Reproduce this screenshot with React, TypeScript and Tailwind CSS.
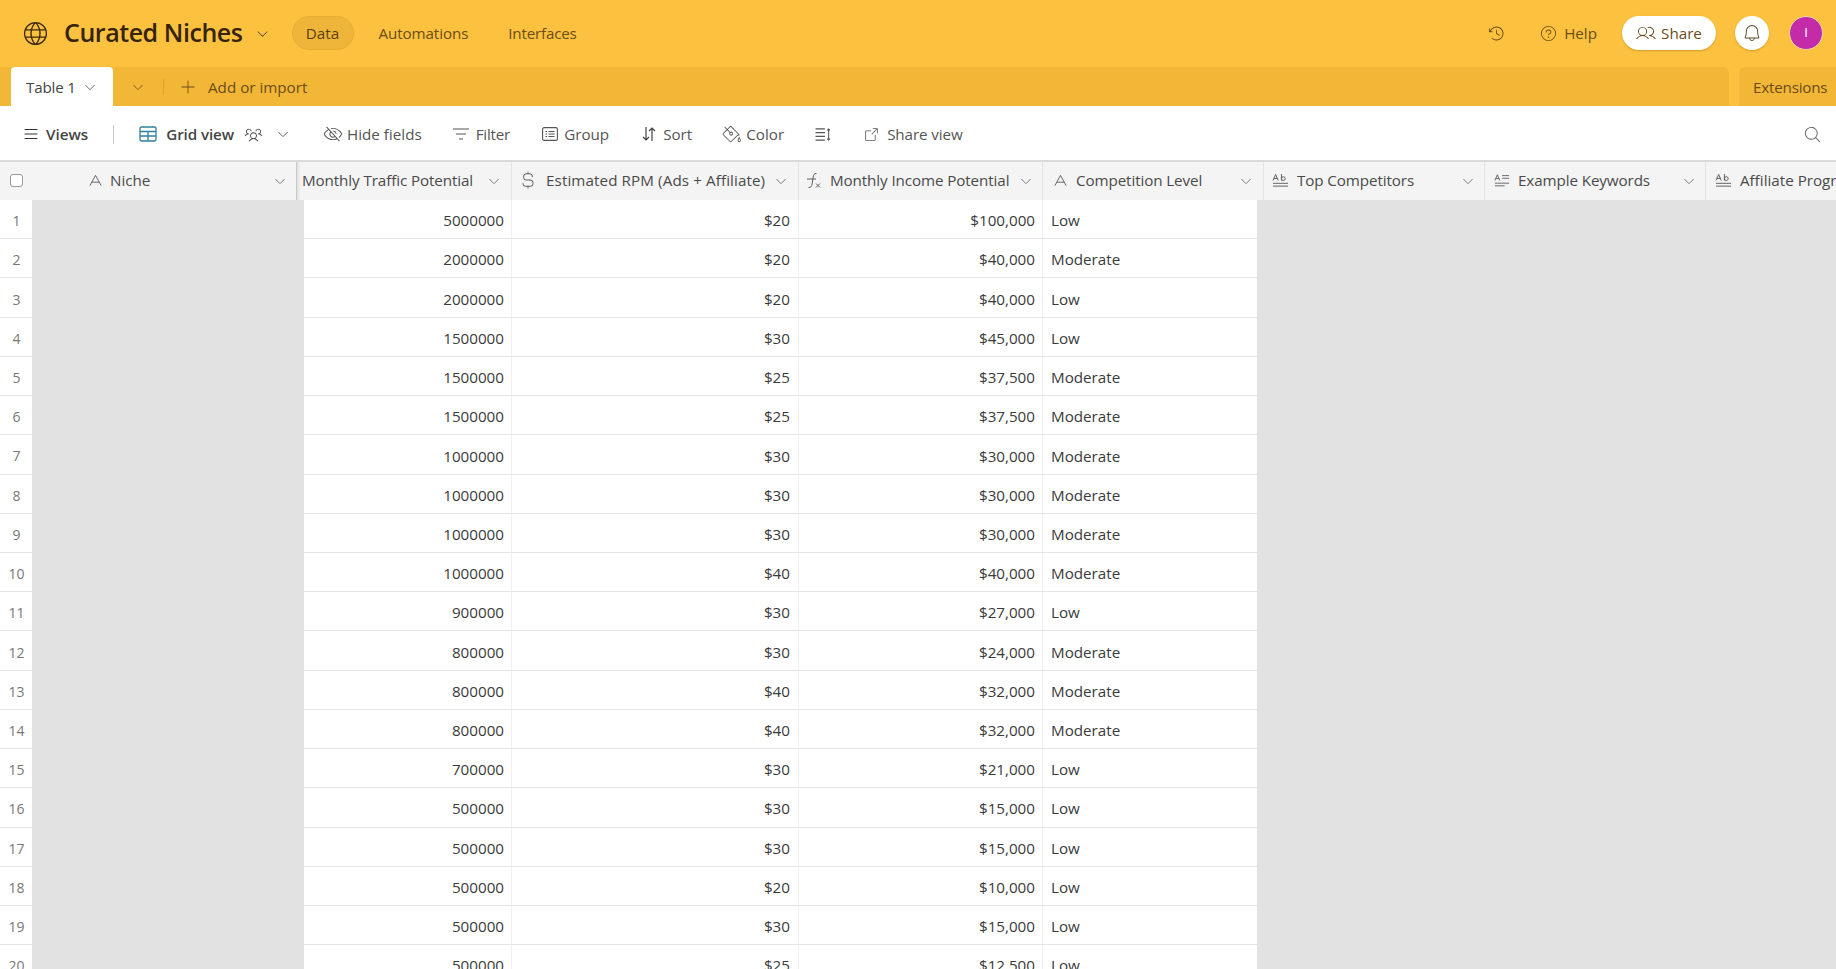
import {
  PiArrowSquareOutLight,
  PiBellLight,
  PiCaretDownLight,
  PiClockCounterClockwiseLight,
  PiCurrencyDollarSimpleLight,
  PiEyeSlashLight,
  PiGlobeLight,
  PiListLight,
  PiMagnifyingGlassLight,
  PiPaintBucketLight,
  PiPlusLight,
  PiQuestionLight,
  PiUsersLight,
  PiUsersThreeLight,
} from 'react-icons/pi';

const rows: [number, string, string, string][] = [
  [5000000, '$20', '$100,000', 'Low'],
  [2000000, '$20', '$40,000', 'Moderate'],
  [2000000, '$20', '$40,000', 'Low'],
  [1500000, '$30', '$45,000', 'Low'],
  [1500000, '$25', '$37,500', 'Moderate'],
  [1500000, '$25', '$37,500', 'Moderate'],
  [1000000, '$30', '$30,000', 'Moderate'],
  [1000000, '$30', '$30,000', 'Moderate'],
  [1000000, '$30', '$30,000', 'Moderate'],
  [1000000, '$40', '$40,000', 'Moderate'],
  [900000, '$30', '$27,000', 'Low'],
  [800000, '$30', '$24,000', 'Moderate'],
  [800000, '$40', '$32,000', 'Moderate'],
  [800000, '$40', '$32,000', 'Moderate'],
  [700000, '$30', '$21,000', 'Low'],
  [500000, '$30', '$15,000', 'Low'],
  [500000, '$30', '$15,000', 'Low'],
  [500000, '$20', '$10,000', 'Low'],
  [500000, '$30', '$15,000', 'Low'],
  [500000, '$25', '$12,500', 'Low'],
];

// field type glyphs, airtable draws its own so these are stroked by hand
const SingleLineIcon = () => (
  <svg viewBox="0 0 16 16" className="h-[15px] w-[15px] shrink-0" fill="none" stroke="#5f5f5f" strokeWidth="1">
    <path d="M2 13.5 8 2.5l6 11M4.2 9.8h7.6" />
  </svg>
);

const LongTextIcon = () => (
  <svg viewBox="0 0 18 16" className="h-[15px] w-[17px] shrink-0" fill="none" stroke="#5a5a5a" strokeWidth="1">
    <path d="M1 8 3.800 1.500 6.600 8M2 5.800h3.600M10 1v7" />
    <circle cx="12" cy="6" r="2" />
    <path d="M1 11h16M1 14h16" />
  </svg>
);

const RichTextIcon = () => (
  <svg viewBox="0 0 18 16" className="h-[15px] w-[16px] shrink-0" fill="none" stroke="#5a5a5a" strokeWidth="1">
    <path d="M1 8 3.800 1.500 6.600 8M2 5.800h3.600M9 2.500h8M9 5.500h8M1 11h16M1 14h11" />
  </svg>
);

const FormulaIcon = () => (
  <svg viewBox="0 0 16 17" className="h-[17px] w-[16px] shrink-0" fill="none" stroke="#5f5f5f" strokeWidth="1">
    <path d="M10.500 1.500c-2.500 0-3 1.300-3.300 3.500L6 12.500c-.3 2-1.200 3-3.500 3M1 7h9" />
    <path d="M10 11.500l4 4M14 11.500l-4 4" />
  </svg>
);

const HeaderCell = ({
  width,
  icon,
  label,
  left,
  chevron,
  tracking = 'tracking-[-0.1px]',
}: {
  width: string;
  icon?: React.ReactNode;
  label: string;
  left: string;
  chevron: string;
  tracking?: string;
}) => (
  <div className={`flex h-full shrink-0 items-center overflow-hidden border-r border-[#e4e4e4] pb-[1px] ${width}`}>
    <div className={`flex shrink-0 items-center gap-[8px] ${left}`}>
      {icon}
      <span className={`whitespace-nowrap text-[#4a4a4a] ${tracking}`}>{label}</span>
    </div>
    <PiCaretDownLight className={`ml-auto shrink-0 text-[14px] text-[#666] ${chevron}`} />
  </div>
);

export default function App() {
  return (
    <div className="flex h-[969px] w-[1836px] flex-col overflow-hidden bg-white font-['Open_Sans','Noto_Sans',sans-serif] text-[15.2px] text-[#3a3a3a]">
      {/* base bar */}
      <div className="flex h-[67px] shrink-0 items-center bg-[#fcc23f] pb-[1px] text-[#6b4c17]">
        <PiGlobeLight className="ml-[21px] text-[29px] text-[#3b2a10]" />
        <h1 className="ml-[14px] whitespace-nowrap text-[25px] font-semibold tracking-[-0.45px] text-[#35240b]">
          Curated Niches
        </h1>
        <PiCaretDownLight className="ml-[12px] text-[15px] text-[#3b2a10]" />
        <div className="ml-[22px] flex h-[34px] w-[62px] items-center justify-center rounded-full border border-[#e5ad33] bg-[#eeb53a] text-[#5b3f0f]">
          Data
        </div>
        <span className="ml-[25px] tracking-[-0.1px]">Automations</span>
        <span className="ml-[40px] tracking-[-0.2px]">Interfaces</span>
        <PiClockCounterClockwiseLight className="ml-auto text-[19px]" />
        <PiQuestionLight className="ml-[33px] text-[19px]" />
        <span className="ml-[6px]">Help</span>
        <div className="ml-[25px] flex h-[34px] w-[94px] items-center justify-center gap-[5px] rounded-full bg-white shadow-[0_1px_2px_rgba(120,80,0,0.35)]">
          <PiUsersLight className="text-[20px]" />
          <span>Share</span>
        </div>
        <div className="ml-[19px] flex h-[34px] w-[34px] items-center justify-center rounded-full bg-white shadow-[0_1px_2px_rgba(120,80,0,0.35)]">
          <PiBellLight className="text-[20px] text-[#5a4a2a]" />
        </div>
        <div className="ml-[20px] mr-[13px] flex h-[34px] w-[34px] items-center justify-center rounded-full border border-[#f0d9a8] bg-[#c42ba8] text-[13px] text-white">
          I
        </div>
      </div>

      {/* table tabs */}
      <div className="flex h-[39px] shrink-0 bg-[#fcc23f] text-[#6b4c17]">
        <div className="flex w-[1729px] min-w-0 items-center rounded-tr-[6px] bg-[#f3b737]">
          <div className="ml-[11px] flex h-full w-[102px] items-center rounded-t-[4px] bg-white pl-[15px] pt-[1px] text-[#444]">
            <span className="tracking-[-0.2px]">Table 1</span>
            <PiCaretDownLight className="ml-[7px] text-[14px] text-[#555]" />
          </div>
          <PiCaretDownLight className="ml-[18px] text-[14px]" />
          <div className="ml-[18px] h-[16px] w-px bg-[#dca52f]" />
          <PiPlusLight className="ml-[15px] text-[18px]" />
          <span className="ml-[11px] pt-[1px]">Add or import</span>
        </div>
        <div className="ml-[10px] flex flex-1 items-center rounded-tl-[6px] bg-[#f3b737] pl-[14px] pt-[1px]">
          <span className="whitespace-nowrap tracking-[-0.2px]">Extensions</span>
        </div>
      </div>

      {/* view bar */}
      <div className="flex h-[54px] shrink-0 items-center bg-white pt-[2px] text-[#555]">
        <PiListLight className="ml-[22px] text-[18px] text-[#333]" />
        <span className="ml-[6px] font-semibold text-[#444]">Views</span>
        <div className="ml-[25px] h-[19px] w-px bg-[#c8c8c8]" />
        <svg viewBox="0 0 18 16" className="ml-[25px] h-[16px] w-[18px]" fill="none" stroke="#2f7f9e" strokeWidth="1.3">
          <rect x="1" y="1" width="16" height="14" rx="1.5" />
          <path d="M1 5.500h16M1 10h16M9 5.500V15" />
        </svg>
        <span className="ml-[9px] font-semibold tracking-[-0.1px] text-[#444]">Grid view</span>
        <PiUsersThreeLight className="ml-[10px] text-[19px] text-[#444]" />
        <PiCaretDownLight className="ml-[13px] text-[14px] text-[#444]" />
        <PiEyeSlashLight className="ml-[33px] text-[20px]" />
        <span className="ml-[4px]">Hide fields</span>
        <svg viewBox="0 0 18 14" className="ml-[30px] h-[14px] w-[18px]" fill="none" stroke="#555" strokeWidth="1.100">
          <path d="M1 2h16M4 7h10M7 12h4" />
        </svg>
        <span className="ml-[6px] tracking-[-0.2px]">Filter</span>
        <svg viewBox="0 0 16 14" className="ml-[32px] h-[14px] w-[16px]" fill="none" stroke="#555" strokeWidth="1.100">
          <rect x="0.600" y="0.600" width="14.800" height="12.800" rx="1.500" />
          <path d="M3.500 4.500h1.500M6.500 4.500h6M3.500 7h1.500M6.500 7h6M3.500 9.500h1.500M6.500 9.500h6" />
        </svg>
        <span className="ml-[6px]">Group</span>
        <svg viewBox="0 0 14 16" className="ml-[33px] h-[16px] w-[14px]" fill="none" stroke="#444" strokeWidth="1.200">
          <path d="M4 1v13M1 11l3 3 3-3M10 15V2M7 5l3-3 3 3" />
        </svg>
        <span className="ml-[7px]">Sort</span>
        <PiPaintBucketLight className="ml-[30px] text-[19px]" />
        <span className="ml-[5px]">Color</span>
        <svg viewBox="0 0 18 16" className="ml-[30px] h-[15px] w-[18px]" fill="none" stroke="#555" strokeWidth="1.100">
          <path d="M1 2h10M1 6h10M1 10h10M1 14h10M15 2v12M13.500 3.500 15 2l1.500 1.500M13.500 12.500 15 14l1.500-1.500" />
        </svg>
        <PiArrowSquareOutLight className="ml-[31px] text-[17px]" />
        <span className="ml-[7px] tracking-[-0.1px]">Share view</span>
        <PiMagnifyingGlassLight className="ml-auto mr-[14px] text-[19px] text-[#666]" />
      </div>

      {/* column headers */}
      <div className="flex h-[40px] shrink-0 border-t-2 border-[#d9d9d9] bg-[#f4f4f4]">
        <div className="flex h-full w-[297px] shrink-0 items-center border-r border-[#c9c9c9] pb-[1px]">
          <div className="ml-[10px] h-[13px] w-[13px] rounded-[3px] border border-[#9a9a9a] bg-white" />
          <div className="ml-[65px] flex items-center gap-[7px]">
            <SingleLineIcon />
            <span className="text-[#4a4a4a]">Niche</span>
          </div>
          <PiCaretDownLight className="ml-auto mr-[9px] text-[14px] text-[#666]" />
        </div>
        <HeaderCell
          width="w-[215px] shadow-[inset_5px_0_3px_-3px_rgba(0,0,0,0.08)]"
          label="Monthly Traffic Potential"
          left="pl-[5px]"
          chevron="mr-[10px]"
        />
        <HeaderCell
          width="w-[287px]"
          icon={<PiCurrencyDollarSimpleLight className="text-[20px] text-[#5f5f5f]" />}
          label="Estimated RPM (Ads + Affiliate)"
          left="pl-[6px]"
          chevron="mr-[10px]"
          tracking="tracking-[0.1px]"
        />
        <HeaderCell
          width="w-[244px]"
          icon={<FormulaIcon />}
          label="Monthly Income Potential"
          left="pl-[7px]"
          chevron="mr-[9px]"
        />
        <HeaderCell
          width="w-[221px]"
          icon={<SingleLineIcon />}
          label="Competition Level"
          left="pl-[10px]"
          chevron="mr-[10px]"
        />
        <HeaderCell
          width="w-[221px]"
          icon={<LongTextIcon />}
          label="Top Competitors"
          left="pl-[8px]"
          chevron="mr-[9px]"
        />
        <HeaderCell
          width="w-[221px]"
          icon={<RichTextIcon />}
          label="Example Keywords"
          left="pl-[9px]"
          chevron="mr-[9px]"
        />
        <div className="flex h-full flex-1 items-center gap-[8px] overflow-hidden pb-[1px] pl-[9px]">
          <LongTextIcon />
          <span className="whitespace-nowrap text-[#4a4a4a]">Affiliate Program</span>
        </div>
      </div>

      {/* records */}
      <div className="flex min-h-0 flex-1 bg-[#e2e2e2]">
        <div className="w-[32px] shrink-0">
          {rows.map((_, i) => (
            <div
              key={i}
              className="flex h-[39.220px] items-center justify-center border-b border-[#e6e6e6] bg-white pl-[1px] pt-[3px] text-[14px] text-[#777]"
            >
              {i + 1}
            </div>
          ))}
        </div>
        <div className="ml-[272px] w-[953px] shrink-0">
          {rows.map(([traffic, rpm, income, level], i) => (
            <div key={i} className="flex h-[39.220px] items-center border-b border-[#e6e6e6] bg-white">
              <div className="flex h-full w-[208px] items-center justify-end border-r border-[#f0f0f0] pr-[7px] pt-[3px]">
                {traffic}
              </div>
              <div className="flex h-full w-[287px] items-center justify-end border-r border-[#f0f0f0] pr-[8px] pt-[3px]">
                {rpm}
              </div>
              <div className="flex h-full w-[244px] items-center justify-end border-r border-[#f0f0f0] pr-[7px] pt-[3px]">
                {income}
              </div>
              <div className="flex h-full flex-1 items-center pl-[8px] pt-[3px]">{level}</div>
            </div>
          ))}
        </div>
      </div>
    </div>
  );
}
